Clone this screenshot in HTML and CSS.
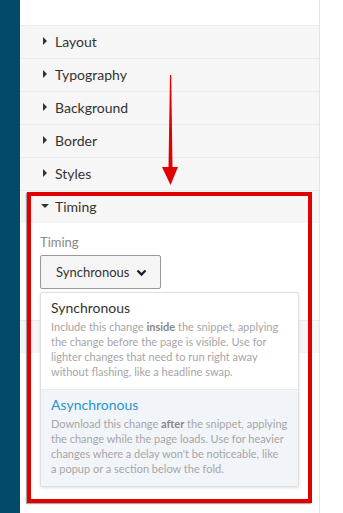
FILE: index.html
```html
<!DOCTYPE html>
<html lang="en">
<head>
    <meta charset="UTF-8">
    <meta name="viewport" content="width=device-width, initial-scale=1.0">
    <title>Editor - Timing</title>
    <link rel="stylesheet" href="styles.css">
</head>
<body>
    <div class="sidebar"></div>

    <div class="panel">
        <div class="panel-top"></div>

        <div class="section"><span class="caret"></span>Layout</div>
        <div class="section"><span class="caret"></span>Typography</div>
        <div class="section"><span class="caret"></span>Background</div>
        <div class="section"><span class="caret"></span>Border</div>
        <div class="section"><span class="caret"></span>Styles</div>
        <div class="section open"><span class="caret down"></span>Timing</div>

        <div class="section-body">
            <p class="field-label">Timing</p>
            <div class="select-wrap">
                <button class="select">Synchronous
                    <svg class="chevron" width="11" height="8" viewBox="0 0 11 8">
                        <path d="M1.5 1.5 L5.5 5.5 L9.5 1.5" fill="none" stroke="#222" stroke-width="2.4"/>
                    </svg>
                </button>

                <!-- open dropdown menu -->
                <div class="menu">
                    <div class="option">
                        <div class="option-title">Synchronous</div>
                        <div class="option-desc">Include this change <strong>inside</strong> the snippet, applying<br>
                            the change before the page is visible. Use for<br>
                            lighter changes that need to run right away<br>
                            without flashing, like a headline swap.</div>
                    </div>
                    <div class="option selected">
                        <div class="option-title">Asynchronous</div>
                        <div class="option-desc">Download this change <strong>after</strong> the snippet, applying<br>
                            the change while the page loads. Use for heavier<br>
                            changes where a delay won't be noticeable, like<br>
                            a popup or a section below the fold.</div>
                    </div>
                </div>
            </div>
        </div>

        <div class="section empty"></div>
    </div>

    <!-- annotation -->
    <svg class="arrow" width="20" height="115" viewBox="0 0 20 115">
        <polygon points="10,0 11.2,0 12.5,92 18,92 10.5,110 2,92 8.5,92" fill="#e10000"/>
    </svg>
    <div class="highlight"></div>
</body>
</html>
```

FILE: styles.css
```css
body {
    font-family: 'Lato', 'Noto Sans', sans-serif;
    background-color: white;
    display: flex;
    height: 100vh;
    margin: 0;
    overflow: hidden;
}
.sidebar {
    width: 20px;
    background: #034a69;
    flex-shrink: 0;
}
.panel {
    width: 299px;
    border-right: 1px solid #e4e4e4;
    background: white;
}
.panel-top {
    height: 25px;
}
.section {
    display: flex;
    align-items: center;
    box-sizing: border-box;
    height: 33px;
    padding-bottom: 2px;
    border-top: 1px solid #ebebeb;
    background: #f6f6f6;
    padding-left: 22px;
    font-size: 14px;
    color: #333;
}
.caret {
    width: 0;
    height: 0;
    border-top: 4px solid transparent;
    border-bottom: 4px solid transparent;
    border-left: 4px solid #333;
    margin-right: 8px;
    margin-left: 1px;
}
.caret.down {
    border-left: 4px solid transparent;
    border-right: 4px solid transparent;
    border-top: 4px solid #333;
    border-bottom: 0;
    margin-left: -1px;
    margin-right: 6px;
}
.section-body {
    height: 87px;
    padding: 10px 20px 0;
}
.field-label {
    margin: 0;
    font-size: 13px;
    line-height: 18px;
    color: #888;
}
.select-wrap {
    position: relative;
    margin-top: 4px;
}
.select {
    display: flex;
    align-items: center;
    gap: 7px;
    width: 121px;
    height: 34px;
    padding: 0 0 0 15px;
    border: 1px solid #999;
    border-radius: 2px;
    background: #f5f5f5;
    font-family: 'Lato', 'Noto Sans', sans-serif;
    font-size: 13px;
    color: #333;
}
.chevron {
    margin-top: 1px;
}
.menu {
    position: absolute;
    top: 37px;
    left: 0;
    width: 257px;
    background: white;
    border: 1px solid #e0e0e0;
    border-radius: 2px;
    box-shadow: 0 1px 3px rgba(0, 0, 0, 0.12);
    z-index: 2;
}
.option {
    padding: 6px 4px 10px 10px;
}
.option.selected {
    background: #f1f5f9;
    border-top: 1px solid #e6ebf0;
    padding-top: 6px;
}
.option-title {
    font-size: 14px;
    line-height: 18px;
    color: #333;
    margin-bottom: 2px;
}
.selected .option-title {
    color: #2a93cc;
}
.option-desc {
    font-size: 11px;
    line-height: 15px;
    color: #a6a6a6;
    white-space: nowrap;
}
.option-desc strong {
    color: #888;
}
.arrow {
    position: absolute;
    left: 160px;
    top: 75px;
}
.highlight {
    position: absolute;
    left: 27px;
    top: 192px;
    width: 277px;
    height: 303px;
    border: 4px solid #e10000;
    box-shadow: -1px 1px 1px rgba(0, 0, 0, 0.35);
    z-index: 3;
}
```
